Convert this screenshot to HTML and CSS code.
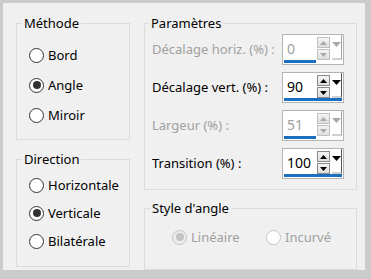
FILE: index.html
```html
<!DOCTYPE html>
<html lang="fr">
<head>
    <meta charset="UTF-8">
    <title>Angle</title>
    <link rel="stylesheet" href="styles.css">
</head>
<body>
<div class="dialog">
    <div class="col col-left">
        <fieldset class="group group-methode">
            <legend>Méthode</legend>
            <label class="radio"><span class="dot"></span>Bord</label>
            <label class="radio checked"><span class="dot"></span>Angle</label>
            <label class="radio"><span class="dot"></span>Miroir</label>
        </fieldset>
        <fieldset class="group group-direction">
            <legend>Direction</legend>
            <label class="radio"><span class="dot"></span>Horizontale</label>
            <label class="radio checked"><span class="dot"></span>Verticale</label>
            <label class="radio"><span class="dot"></span>Bilatérale</label>
        </fieldset>
    </div>
    <div class="col col-right">
        <fieldset class="group group-params">
            <legend>Paramètres</legend>
            <div class="row disabled">
                <span class="row-label">Décalage horiz. (%) :</span>
                <div class="spin">
                    <div class="spin-main">
                        <span class="spin-value">0</span>
                        <div class="spin-arrows">
                            <span class="arrow"><svg width="7" height="4" viewBox="0 0 7 4"><path d="M0 4 L3.5 0 L7 4 Z"/></svg></span>
                            <span class="arrow"><svg width="7" height="4" viewBox="0 0 7 4"><path d="M0 0 L7 0 L3.5 4 Z"/></svg></span>
                        </div>
                        <div class="spin-drop"><svg width="9" height="5" viewBox="0 0 9 5"><path d="M0 0 L9 0 L4.5 5 Z"/></svg></div>
                    </div>
                    <div class="spin-track"><span class="spin-bar short"></span></div>
                </div>
            </div>
            <div class="row">
                <span class="row-label">Décalage vert. (%) :</span>
                <div class="spin">
                    <div class="spin-main">
                        <span class="spin-value">90</span>
                        <div class="spin-arrows">
                            <span class="arrow"><svg width="7" height="4" viewBox="0 0 7 4"><path d="M0 4 L3.5 0 L7 4 Z"/></svg></span>
                            <span class="arrow"><svg width="7" height="4" viewBox="0 0 7 4"><path d="M0 0 L7 0 L3.5 4 Z"/></svg></span>
                        </div>
                        <div class="spin-drop"><svg width="9" height="5" viewBox="0 0 9 5"><path d="M0 0 L9 0 L4.5 5 Z"/></svg></div>
                    </div>
                    <div class="spin-track"><span class="spin-bar"></span></div>
                </div>
            </div>
            <div class="row disabled">
                <span class="row-label">Largeur (%) :</span>
                <div class="spin">
                    <div class="spin-main">
                        <span class="spin-value">51</span>
                        <div class="spin-arrows">
                            <span class="arrow"><svg width="7" height="4" viewBox="0 0 7 4"><path d="M0 4 L3.5 0 L7 4 Z"/></svg></span>
                            <span class="arrow"><svg width="7" height="4" viewBox="0 0 7 4"><path d="M0 0 L7 0 L3.5 4 Z"/></svg></span>
                        </div>
                        <div class="spin-drop"><svg width="9" height="5" viewBox="0 0 9 5"><path d="M0 0 L9 0 L4.5 5 Z"/></svg></div>
                    </div>
                    <div class="spin-track"><span class="spin-bar short"></span></div>
                </div>
            </div>
            <div class="row">
                <span class="row-label">Transition (%) :</span>
                <div class="spin">
                    <div class="spin-main">
                        <span class="spin-value">100</span>
                        <div class="spin-arrows">
                            <span class="arrow"><svg width="7" height="4" viewBox="0 0 7 4"><path d="M0 4 L3.5 0 L7 4 Z"/></svg></span>
                            <span class="arrow"><svg width="7" height="4" viewBox="0 0 7 4"><path d="M0 0 L7 0 L3.5 4 Z"/></svg></span>
                        </div>
                        <div class="spin-drop"><svg width="9" height="5" viewBox="0 0 9 5"><path d="M0 0 L9 0 L4.5 5 Z"/></svg></div>
                    </div>
                    <div class="spin-track"><span class="spin-bar"></span></div>
                </div>
            </div>
        </fieldset>
        <fieldset class="group group-style">
            <legend>Style d'angle</legend>
            <div class="radio-line">
                <label class="radio disabled checked"><span class="dot"></span>Linéaire</label>
                <label class="radio disabled"><span class="dot"></span>Incurvé</label>
            </div>
        </fieldset>
    </div>
</div>
</body>
</html>
```

FILE: styles.css
```css
body {
    margin: 0;
    padding: 3px 6px 9px 3px;
    background-color: #cbcbcb;
    font-family: 'Noto Sans', 'Open Sans', sans-serif;
    font-size: 13px;
    color: #000;
}

.dialog {
    display: flex;
    gap: 14px;
    height: 267px;
    box-sizing: border-box;
    padding: 13px 8px 0 13px;
    background-color: #f0f0f0;
}

.col {
    display: flex;
    flex-direction: column;
    min-width: 0;
}

.col-left {
    width: 114px;
    flex-shrink: 0;
    gap: 12px;
}

.col-right {
    flex: 1;
    gap: 11px;
}

.group {
    margin: 0;
    border: 1px solid #dcdcdc;
    padding: 0 6px;
    min-width: 0;
}

.group legend {
    padding: 0 2px;
    line-height: 14px;
}

/* radio buttons */
.radio {
    display: flex;
    align-items: center;
    gap: 4px;
    white-space: nowrap;
}

.dot {
    flex-shrink: 0;
    width: 13px;
    height: 13px;
    border: 1px solid #333;
    border-radius: 50%;
    background-color: #fff;
    display: flex;
    align-items: center;
    justify-content: center;
}

.radio.checked .dot::after {
    content: "";
    width: 8px;
    height: 8px;
    border-radius: 50%;
    background-color: #333;
}

.radio.disabled {
    color: #a0a0a0;
}

.radio.disabled .dot {
    border-color: #c4c4c4;
}

.radio.disabled.checked .dot {
    background-color: #ececec;
}

.radio.disabled.checked .dot::after {
    background-color: #c4c4c4;
}

.group-methode {
    padding: 10px 6px 9px 12px;
}

.group-methode .radio {
    height: 30px;
}

.group-methode legend,
.group-direction legend {
    margin-left: -7px;
}

.group-direction {
    padding: 5px 6px 11px 12px;
}

.group-direction .radio {
    height: 28px;
}

/* parameters */
.group-params {
    padding: 4px 12px 10px 7px;
    display: flex;
    flex-direction: column;
    gap: 7px;
}

.group-params legend {
    margin-left: -3px;
}

.row {
    display: flex;
    align-items: center;
    justify-content: space-between;
    height: 31px;
    white-space: nowrap;
}

.row-label {
    margin-top: -1px;
}

.row.disabled .row-label {
    color: #a0a0a0;
}

.spin {
    flex-shrink: 0;
    width: 62px;
    height: 31px;
    box-sizing: border-box;
    border: 1px solid #b4b4b4;
    background-color: #fff;
    display: flex;
    flex-direction: column;
}

.spin-main {
    flex: 1;
    display: flex;
}

.spin-value {
    width: 30px;
    padding: 3px 0 0 4px;
    font-size: 14px;
    line-height: 22px;
}

.spin-arrows {
    width: 15px;
    padding-top: 2px;
    display: flex;
    flex-direction: column;
    gap: 1px;
}

.arrow {
    width: 11px;
    height: 9px;
    border: 1px solid #8a8a8a;
    background: linear-gradient(#f4f4f4, #dedede);
    display: flex;
    align-items: center;
    justify-content: center;
}

.arrow svg,
.spin-drop svg {
    fill: #000;
}

.spin-drop {
    width: 10px;
    border-right: 1px solid #555;
    border-bottom: 2px solid #d0d0d0;
    padding-top: 7px;
    box-sizing: border-box;
    display: flex;
    justify-content: center;
    align-items: flex-start;
}

.spin-track {
    height: 3px;
    margin: 0 1px 1px 1px;
}

.spin-bar {
    display: block;
    height: 100%;
    width: 100%;
    background-color: #1c6ebf;
}

.spin-bar.short {
    width: 32px;
}

.row.disabled .spin-value {
    color: #a0a0a0;
}

.row.disabled .arrow {
    border-color: #c0c0c0;
}

.row.disabled .arrow svg,
.row.disabled .spin-drop svg {
    fill: #a8a8a8;
}

.row.disabled .spin-drop {
    border-right-color: #a0a0a0;
}

/* style d'angle */
.group-style {
    flex: 1;
    padding: 8px 6px 14px 27px;
}

.group-style legend {
    margin-left: -22px;
}

.radio-line {
    display: flex;
    height: 28px;
}

.radio-line .radio:first-child {
    width: 94px;
    flex-shrink: 0;
}
```
